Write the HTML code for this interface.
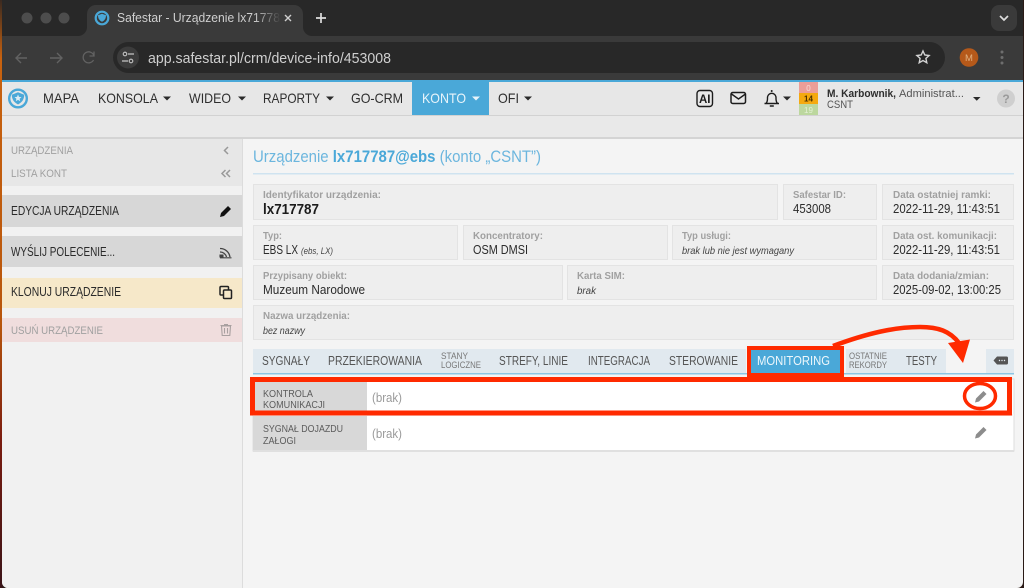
<!DOCTYPE html>
<html lang="pl"><head><meta charset="utf-8"><title>Safestar - Urządzenie lx717787</title>
<style>
html,body{margin:0;padding:0;background:#2a1510;width:1024px;height:588px;overflow:hidden}
svg{display:block;position:absolute;left:0;top:0;filter:blur(.35px)}
text{font-family:"Liberation Sans",sans-serif;white-space:pre}
.n{font-size:14px;fill:#2e2e2e}
.s{font-size:11px;fill:#a0a0a0}
.b{font-size:12.5px;fill:#2a2a2a}
.l{font-size:10px;fill:#a0a0a0;font-weight:bold}
.v{font-size:12.5px;fill:#2c2c2c}
.i{font-size:10px;fill:#444;font-style:italic}
.t{font-size:12.5px;fill:#555}
.t2{font-size:9px;fill:#777}
.r{font-size:10px;fill:#5c5c5c}
.bx{fill:#eeeeee;stroke:#e3e3e3;stroke-width:1}
</style></head><body>
<svg width="1024" height="588" viewBox="0 0 1024 588" xmlns="http://www.w3.org/2000/svg">
<defs>
<linearGradient id="w" x1="0" y1="0" x2="0" y2="1"><stop offset="0" stop-color="#3a2a20"/><stop offset=".1" stop-color="#c8620f"/><stop offset=".55" stop-color="#b8560c"/><stop offset=".75" stop-color="#7a1c10"/><stop offset="1" stop-color="#3a1418"/></linearGradient>
<linearGradient id="f" x1="0" y1="0" x2="1" y2="0"><stop offset="0" stop-color="#3a3a3a" stop-opacity="0"/><stop offset="1" stop-color="#3a3a3a"/></linearGradient>
<clipPath id="win"><path d="M2 0H1023V582a6 6 0 0 1-6 6H8a6 6 0 0 1-6-6Z"/></clipPath>
</defs>
<rect width="1024" height="588" fill="#2a1a16"/>
<rect x="0" y="0" width="2.5" height="588" fill="url(#w)"/>
<g clip-path="url(#win)">
<!-- browser chrome -->
<rect x="0" y="0" width="1024" height="36" fill="#282828"/>
<rect x="0" y="36" width="1024" height="44" fill="#3a3a3a"/>
<path d="M78 36a9 9 0 0 0 9-9V14a9 9 0 0 1 9-9H294a9 9 0 0 1 9 9V27a9 9 0 0 0 9 9Z" fill="#3a3a3a"/>
<circle cx="27" cy="18" r="5.5" fill="#4d4d4d"/><circle cx="46" cy="18" r="5.5" fill="#4d4d4d"/><circle cx="64" cy="18" r="5.5" fill="#4d4d4d"/>
<circle cx="102" cy="18" r="6.3" fill="none" stroke="#4aa8d8" stroke-width="2.2"/>
<path d="M98 15.2 102 13.800l4 1.400c0 3.300-1.500 5.300-4 6.500-2.500-1.200-4-3.200-4-6.500Z" fill="#4aa8d8"/>
<text x="117" y="22" font-size="12.5" fill="#cfcfcf" textLength="163" lengthAdjust="spacingAndGlyphs">Safestar - Urządzenie lx71778</text>
<rect x="254" y="8" width="27" height="20" fill="url(#f)"/>
<path d="M285 15l6 6M291 15l-6 6" stroke="#cfcfcf" stroke-width="1.400"/>
<path d="M321 13v10M316 18h10" stroke="#ddd" stroke-width="1.700"/>
<rect x="991" y="5" width="26" height="26" rx="8" fill="#3a3a3a"/>
<path d="M1000 16l4 4 4-4" fill="none" stroke="#ddd" stroke-width="1.700"/>
<path d="M27 58H17M21 53l-5 5 5 5" fill="none" stroke="#626262" stroke-width="1.400"/>
<path d="M50 58H61M57 53l5 5-5 5" fill="none" stroke="#626262" stroke-width="1.400"/>
<path d="M94 56a5.500 5.500 0 1 0-.5 4M94 51.500V56h-4.500" fill="none" stroke="#626262" stroke-width="1.300"/>
<rect x="113" y="42" width="832" height="31" rx="15.500" fill="#282828"/>
<circle cx="128" cy="57.500" r="11" fill="#3c3c3c"/>
<path d="M128 54h6M122 61h6" stroke="#c4c4c4" stroke-width="1.200"/><circle cx="125" cy="54" r="1.800" fill="none" stroke="#c4c4c4" stroke-width="1.100"/><circle cx="131" cy="61" r="1.800" fill="none" stroke="#c4c4c4" stroke-width="1.100"/>
<text x="148" y="63" font-size="14.500" fill="#cfcfcf" textLength="243" lengthAdjust="spacingAndGlyphs">app.safestar.pl/crm/device-info/453008</text>
<path d="M923 51l1.800 4 4.300.5-3.200 2.900.9 4.300-3.800-2.200-3.800 2.200.9-4.300-3.200-2.900 4.300-.5Z" fill="none" stroke="#d4d4d4" stroke-width="1.400"/>
<circle cx="969" cy="57.500" r="9.300" fill="#b5591a"/>
<text x="969" y="61" font-size="9.500" fill="#e0b080" text-anchor="middle">M</text>
<circle cx="1002" cy="52" r="1.500" fill="#6e6e6e"/><circle cx="1002" cy="57.500" r="1.500" fill="#6e6e6e"/><circle cx="1002" cy="63" r="1.500" fill="#6e6e6e"/>
<!-- page -->
<rect x="0" y="80" width="1024" height="2" fill="#4aa8d8"/>
<rect x="0" y="82" width="1024" height="33" fill="#e7e7e7"/>
<rect x="0" y="115" width="1024" height="1" fill="#d2d2d2"/>
<rect x="0" y="116" width="1024" height="21" fill="#e9e9e9"/>
<rect x="0" y="137" width="1024" height="2" fill="#d4d4d4"/>
<rect x="0" y="139" width="1024" height="449" fill="#f4f4f4"/>
<!-- nav -->
<circle cx="18" cy="98.500" r="8.800" fill="none" stroke="#4aa8d8" stroke-width="2.400"/>
<path d="M11.800 94.800 18 92.300 24.200 94.800c0 4.800-2.400 7.800-6.200 9.700-3.800-1.900-6.200-4.900-6.200-9.700Z" fill="#4aa8d8"/>
<path d="M18 94.500l1 2.400 2.500.2-1.900 1.600.6 2.500-2.200-1.300-2.200 1.300.6-2.500-1.900-1.600 2.500-.2Z" fill="#dcecf5"/>
<text class="n" x="43" y="103" textLength="36" lengthAdjust="spacingAndGlyphs">MAPA</text>
<text class="n" x="98" y="103" textLength="60" lengthAdjust="spacingAndGlyphs">KONSOLA</text>
<path d="M163 96.500h8l-4 4Z" fill="#2a2a2a"/>
<text class="n" x="189" y="103" textLength="42" lengthAdjust="spacingAndGlyphs">WIDEO</text>
<path d="M238 96.500h8l-4 4Z" fill="#2a2a2a"/>
<text class="n" x="263" y="103" textLength="57" lengthAdjust="spacingAndGlyphs">RAPORTY</text>
<path d="M326 96.500h8l-4 4Z" fill="#2a2a2a"/>
<text class="n" x="351" y="103" textLength="52" lengthAdjust="spacingAndGlyphs">GO-CRM</text>
<rect x="412" y="82" width="77" height="33" fill="#4aa8d8"/>
<text class="n" x="422" y="103" textLength="44" lengthAdjust="spacingAndGlyphs" style="fill:#e8f4fa">KONTO</text>
<path d="M472 96.500h8l-4 4Z" fill="#e8f4fa"/>
<text class="n" x="498" y="103" textLength="21" lengthAdjust="spacingAndGlyphs">OFI</text>
<path d="M524 96.500h8l-4 4Z" fill="#2a2a2a"/>
<rect x="697" y="90.500" width="15.500" height="16" rx="3" fill="none" stroke="#1c1c1c" stroke-width="1.400"/>
<text x="704.700" y="103" font-size="11.500" font-weight="bold" fill="#1c1c1c" text-anchor="middle">AI</text>
<rect x="731" y="92.500" width="14.500" height="11" rx="1.800" fill="none" stroke="#1c1c1c" stroke-width="1.500"/>
<path d="M731.500 94l7 5 7-5" fill="none" stroke="#1c1c1c" stroke-width="1.400"/>
<path d="M764.500 103.500h14.500M766 103.500c1.800-2 1.500-4 1.500-6.500a4.300 4.300 0 0 1 8.500 0c0 2.500-.3 4.500 1.500 6.500M769.800 106h4" fill="none" stroke="#1c1c1c" stroke-width="1.400"/>
<circle cx="771.700" cy="91" r="1" fill="#1c1c1c"/>
<path d="M783 96.500h8l-4 4Z" fill="#2a2a2a"/>
<rect x="799" y="82" width="19" height="11" fill="#ec9e98"/>
<rect x="799" y="93" width="19" height="11" fill="#f5a90f"/>
<rect x="799" y="104" width="19" height="11" fill="#bcd79e"/>
<text x="808.500" y="91" font-size="8" fill="#f8dcd8" text-anchor="middle">0</text>
<text x="808.500" y="101.500" font-size="8" font-weight="bold" fill="#4a3000" text-anchor="middle">14</text>
<text x="808.500" y="113" font-size="8" fill="#e4f0d4" text-anchor="middle">19</text>
<text x="827" y="97" font-size="11" font-weight="bold" fill="#2e2e2e" textLength="69" lengthAdjust="spacingAndGlyphs">M. Karbownik,</text>
<text x="899" y="97" font-size="11" fill="#555" textLength="65" lengthAdjust="spacingAndGlyphs">Administrat...</text>
<text x="827" y="108" font-size="11" fill="#555" textLength="26" lengthAdjust="spacingAndGlyphs">CSNT</text>
<path d="M973 97h7.500l-3.750 3.750Z" fill="#2a2a2a"/>
<circle cx="1006" cy="98.500" r="9" fill="#cfcfcf"/>
<text x="1006" y="103" font-size="12" font-weight="bold" fill="#9a9a9a" text-anchor="middle">?</text>
<!-- sidebar -->
<rect x="2" y="139" width="240" height="47" fill="#e7e7e7"/>
<rect x="242" y="139" width="1" height="449" fill="#dcdcdc"/>
<rect x="2" y="186" width="240" height="402" fill="#f1f1f1"/>
<text class="s" x="11" y="154" textLength="62" lengthAdjust="spacingAndGlyphs">URZĄDZENIA</text>
<text class="s" x="11" y="177" textLength="56" lengthAdjust="spacingAndGlyphs">LISTA KONT</text>
<path d="M228 147l-3.500 3.500 3.500 3.500" fill="none" stroke="#999" stroke-width="1.500"/>
<path d="M225.500 170l-3.500 3.500 3.500 3.500M230 170l-3.500 3.500 3.500 3.500" fill="none" stroke="#999" stroke-width="1.500"/>
<rect x="2" y="195" width="240" height="32" fill="#d7d7d7"/>
<text class="b" x="11" y="215" textLength="108" lengthAdjust="spacingAndGlyphs">EDYCJA URZĄDZENIA</text>
<path d="M220 217l1-4 7-7 3 3-7 7Z" fill="#111"/>
<rect x="2" y="236" width="240" height="31" fill="#d7d7d7"/>
<text class="b" x="11" y="256" textLength="104" lengthAdjust="spacingAndGlyphs">WYŚLIJ POLECENIE...</text>
<path d="M220 248.500a10 10 0 0 1 10 8.500M220 252a6.500 6.500 0 0 1 6.500 5" fill="none" stroke="#444" stroke-width="1.300"/>
<path d="M220 255h3v2h-3ZM220 257.800h11.500" fill="#444" stroke="#444" stroke-width="1.100"/>
<rect x="2" y="278" width="240" height="30" fill="#f6e8c9"/>
<text class="b" x="11" y="296" textLength="110" lengthAdjust="spacingAndGlyphs">KLONUJ URZĄDZENIE</text>
<rect x="220" y="286.500" width="8.500" height="8.500" rx="1" fill="none" stroke="#222" stroke-width="1.500"/>
<rect x="223.500" y="290" width="8" height="8.500" rx="1" fill="#f6e8c9" stroke="#222" stroke-width="1.500"/>
<rect x="2" y="318" width="240" height="24" fill="#f0dddd"/>
<text class="s" x="11" y="334" textLength="92" lengthAdjust="spacingAndGlyphs">USUŃ URZĄDZENIE</text>
<path d="M221.500 326h9l-.7 9.500h-7.600ZM220.500 325.500h11M224 324.500h4M224.500 328v5.500M227.500 328v5.500" fill="none" stroke="#a8a0a0" stroke-width="1.100"/>
<!-- main -->
<text x="253" y="162" font-size="16.500" fill="#6cb6de" textLength="288" lengthAdjust="spacingAndGlyphs">Urządzenie <tspan font-weight="bold" fill="#4aa8d8">lx717787@ebs</tspan> (konto „CSNT”)</text>
<rect x="253" y="173" width="761" height="1.500" fill="#cfe3f0"/>
<rect class="bx" x="253.500" y="184.500" width="524" height="35"/>
<rect class="bx" x="783.500" y="184.500" width="93" height="35"/>
<rect class="bx" x="882.500" y="184.500" width="131" height="35"/>
<rect class="bx" x="253.500" y="225.500" width="204" height="34"/>
<rect class="bx" x="463.500" y="225.500" width="204" height="34"/>
<rect class="bx" x="672.500" y="225.500" width="204" height="34"/>
<rect class="bx" x="882.500" y="225.500" width="131" height="34"/>
<rect class="bx" x="253.500" y="265.500" width="309" height="34"/>
<rect class="bx" x="567.500" y="265.500" width="309" height="34"/>
<rect class="bx" x="882.500" y="265.500" width="131" height="34"/>
<rect class="bx" x="253.500" y="305.500" width="760" height="34"/>
<text class="l" x="263" y="198" textLength="118" lengthAdjust="spacingAndGlyphs">Identyfikator urządzenia:</text>
<text x="263" y="214" font-size="14.500" font-weight="bold" fill="#1c1c1c" textLength="56" lengthAdjust="spacingAndGlyphs">lx717787</text>
<text class="l" x="793" y="198" textLength="53" lengthAdjust="spacingAndGlyphs">Safestar ID:</text>
<text class="v" x="793" y="213" textLength="38" lengthAdjust="spacingAndGlyphs">453008</text>
<text class="l" x="893" y="198" textLength="98" lengthAdjust="spacingAndGlyphs">Data ostatniej ramki:</text>
<text class="v" x="893" y="213" textLength="107" lengthAdjust="spacingAndGlyphs">2022-11-29, 11:43:51</text>
<text class="l" x="263" y="239" textLength="19" lengthAdjust="spacingAndGlyphs">Typ:</text>
<text class="v" x="263" y="254" textLength="35" lengthAdjust="spacingAndGlyphs">EBS LX</text>
<text class="i" x="301" y="254" textLength="32" lengthAdjust="spacingAndGlyphs" style="font-size:9px">(ebs, LX)</text>
<text class="l" x="473" y="239" textLength="70" lengthAdjust="spacingAndGlyphs">Koncentratory:</text>
<text class="v" x="473" y="254" textLength="55" lengthAdjust="spacingAndGlyphs">OSM DMSI</text>
<text class="l" x="682" y="239" textLength="49" lengthAdjust="spacingAndGlyphs">Typ usługi:</text>
<text class="i" x="682" y="254" textLength="112" lengthAdjust="spacingAndGlyphs">brak lub nie jest wymagany</text>
<text class="l" x="893" y="239" textLength="104" lengthAdjust="spacingAndGlyphs">Data ost. komunikacji:</text>
<text class="v" x="893" y="254" textLength="107" lengthAdjust="spacingAndGlyphs">2022-11-29, 11:43:51</text>
<text class="l" x="263" y="279" textLength="84" lengthAdjust="spacingAndGlyphs">Przypisany obiekt:</text>
<text class="v" x="263" y="294" textLength="102" lengthAdjust="spacingAndGlyphs">Muzeum Narodowe</text>
<text class="l" x="577" y="279" textLength="48" lengthAdjust="spacingAndGlyphs">Karta SIM:</text>
<text class="i" x="577" y="294" textLength="19" lengthAdjust="spacingAndGlyphs">brak</text>
<text class="l" x="893" y="279" textLength="96" lengthAdjust="spacingAndGlyphs">Data dodania/zmian:</text>
<text class="v" x="893" y="294" textLength="108" lengthAdjust="spacingAndGlyphs">2025-09-02, 13:00:25</text>
<text class="l" x="263" y="319" textLength="87" lengthAdjust="spacingAndGlyphs">Nazwa urządzenia:</text>
<text class="i" x="263" y="334" textLength="42" lengthAdjust="spacingAndGlyphs">bez nazwy</text>
<!-- tabs -->
<rect x="253" y="349" width="493" height="24" fill="#e1e9ef"/>
<rect x="846" y="349" width="100" height="24" fill="#e1e9ef"/>
<rect x="986" y="349" width="28" height="24" fill="#e1e9ef"/>
<rect x="253" y="373" width="761" height="1.500" fill="#8cc6e4"/>
<text class="t" x="262" y="365" textLength="48" lengthAdjust="spacingAndGlyphs">SYGNAŁY</text>
<text class="t" x="328" y="365" textLength="94" lengthAdjust="spacingAndGlyphs">PRZEKIEROWANIA</text>
<text class="t2" x="441" y="359" textLength="27" lengthAdjust="spacingAndGlyphs">STANY</text>
<text class="t2" x="441" y="368" textLength="40" lengthAdjust="spacingAndGlyphs">LOGICZNE</text>
<text class="t" x="499" y="365" textLength="69" lengthAdjust="spacingAndGlyphs">STREFY, LINIE</text>
<text class="t" x="588" y="365" textLength="62" lengthAdjust="spacingAndGlyphs">INTEGRACJA</text>
<text class="t" x="669" y="365" textLength="69" lengthAdjust="spacingAndGlyphs">STEROWANIE</text>
<rect x="750" y="349" width="90" height="24" fill="#4aa8d8"/>
<text class="t" x="757" y="365" textLength="73" lengthAdjust="spacingAndGlyphs" style="fill:#eef7fb">MONITORING</text>
<text class="t2" x="849" y="359" textLength="38" lengthAdjust="spacingAndGlyphs">OSTATNIE</text>
<text class="t2" x="849" y="368" textLength="38" lengthAdjust="spacingAndGlyphs">REKORDY</text>
<text class="t" x="906" y="365" textLength="31" lengthAdjust="spacingAndGlyphs">TESTY</text>
<path d="M997 356.500h9.500a1.500 1.500 0 0 1 1.500 1.500v5a1.500 1.500 0 0 1-1.500 1.500H997l-3.500-4Z" fill="#555"/>
<circle cx="999.500" cy="360.500" r=".7" fill="#e1e9ef"/><circle cx="1002" cy="360.500" r=".7" fill="#e1e9ef"/><circle cx="1004.500" cy="360.500" r=".7" fill="#e1e9ef"/>
<!-- table -->
<rect x="253" y="379" width="761" height="72" fill="#fff" stroke="#dedede"/>
<rect x="253" y="379" width="114" height="72" fill="#d8d8d8"/>
<rect x="253" y="450" width="761" height="2" fill="#e0e0e0"/>
<rect x="253" y="414" width="761" height="2" fill="#f4f4f4"/>
<text class="r" x="263" y="397" textLength="50" lengthAdjust="spacingAndGlyphs">KONTROLA</text>
<text class="r" x="263" y="408" textLength="62" lengthAdjust="spacingAndGlyphs">KOMUNIKACJI</text>
<text class="r" x="263" y="432" textLength="80" lengthAdjust="spacingAndGlyphs">SYGNAŁ DOJAZDU</text>
<text class="r" x="263" y="444" textLength="33" lengthAdjust="spacingAndGlyphs">ZAŁOGI</text>
<text x="372" y="402" font-size="12.5" fill="#9a9a9a" textLength="30" lengthAdjust="spacingAndGlyphs">(brak)</text>
<text x="372" y="438" font-size="12.5" fill="#9a9a9a" textLength="30" lengthAdjust="spacingAndGlyphs">(brak)</text>
<path d="M975 402.500l1-4 7.500-7.500 3 3-7.500 7.500Z" fill="#8c8c8c"/>
<path d="M975 438.500l1-4 7.500-7.500 3 3-7.500 7.500Z" fill="#8c8c8c"/>
<!-- annotations -->
<rect x="252.500" y="379.500" width="757" height="33.500" fill="none" stroke="#ff2a00" stroke-width="5"/>
<rect x="749" y="348" width="93" height="27" fill="none" stroke="#ff2a00" stroke-width="4"/>
<ellipse cx="980" cy="396" rx="15.500" ry="12.500" fill="none" stroke="#ff2a00" stroke-width="3.500"/>
<path d="M833 346C868 333 895 327 920 327C938 327 950 331 959 343" fill="none" stroke="#ff2a00" stroke-width="4.500"/>
<path d="M948 343 970 339.500 963 363Z" fill="#ff2a00"/>
</g>
</svg>
</body></html>
